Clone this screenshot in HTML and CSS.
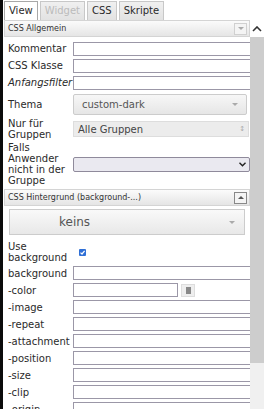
FILE: index.html
```html
<!DOCTYPE html>
<html lang="de">
<head>
    <meta charset="UTF-8">
    <meta name="viewport" content="width=device-width, initial-scale=1.0">
    <title>Widget Eigenschaften</title>
    <link rel="stylesheet" href="styles.css">
</head>
<body>
    <div class="edge"></div>

    <div class="panel">
        <!-- tabs -->
        <div class="tabs">
            <span class="tab active">View</span>
            <span class="tab disabled">Widget</span>
            <span class="tab">CSS</span>
            <span class="tab">Skripte</span>
        </div>

        <div class="main">
            <div class="content">
                <div class="group-head">
                    CSS Allgemein
                    <span class="toggle"><i class="tri-down"></i></span>
                </div>

                <div class="row">
                    <span class="label">Kommentar</span>
                    <span class="field"></span>
                </div>
                <div class="row">
                    <span class="label">CSS Klasse</span>
                    <span class="field"></span>
                </div>
                <div class="row">
                    <span class="label italic">Anfangsfilter</span>
                    <span class="field"></span>
                </div>
                <div class="row">
                    <span class="label">Thema</span>
                    <span class="ui-select">custom-dark <i class="tri-down"></i></span>
                </div>
                <div class="row multi">
                    <span class="label">Nur für Gruppen</span>
                    <span class="plain-select">Alle Gruppen <i class="updown">&#x2195;</i></span>
                </div>
                <div class="row multi">
                    <span class="label">Falls Anwender nicht in der Gruppe</span>
                    <span class="native-select">
                        <svg width="7" height="5" viewBox="0 0 7 5"><path d="M0.5 0.8 L3.5 3.8 L6.5 0.8" fill="none" stroke="#222" stroke-width="1.4"/></svg>
                    </span>
                </div>

                <div class="group-head second">
                    CSS Hintergrund (background-...)
                    <span class="toggle dark"><i class="tri-up"></i></span>
                </div>

                <div class="big-select">keins <i class="tri-down"></i></div>

                <div class="row multi use">
                    <span class="label">Use background</span>
                    <span class="check">
                        <svg width="7" height="7" viewBox="0 0 7 7"><rect width="7" height="7" rx="1" fill="#2f6fd6"/><path d="M1.5 3.6 L3 5 L5.6 1.8" fill="none" stroke="#fff" stroke-width="1.2"/></svg>
                    </span>
                </div>
                <div class="row">
                    <span class="label">background</span>
                    <span class="field"></span>
                </div>
                <div class="row">
                    <span class="label">-color</span>
                    <span class="field short"></span>
                    <span class="color-btn"><i></i></span>
                </div>
                <div class="row">
                    <span class="label">-image</span>
                    <span class="field"></span>
                </div>
                <div class="row">
                    <span class="label">-repeat</span>
                    <span class="field"></span>
                </div>
                <div class="row">
                    <span class="label">-attachment</span>
                    <span class="field"></span>
                </div>
                <div class="row">
                    <span class="label">-position</span>
                    <span class="field"></span>
                </div>
                <div class="row">
                    <span class="label">-size</span>
                    <span class="field"></span>
                </div>
                <div class="row">
                    <span class="label">-clip</span>
                    <span class="field"></span>
                </div>
                <div class="row">
                    <span class="label">-origin</span>
                    <span class="field"></span>
                </div>
            </div>

            <!-- scrollbar -->
            <div class="scrollbar">
                <div class="sb-up">
                    <svg width="10" height="6" viewBox="0 0 10 6"><path d="M1 5 L5 1 L9 5" fill="none" stroke="#333" stroke-width="1.6"/></svg>
                </div>
                <div class="sb-thumb"></div>
                <div class="sb-track"></div>
            </div>
        </div>
    </div>
</body>
</html>
```

FILE: styles.css
```css
/* panel layout */
body {
    margin: 0;
    height: 409px;
    overflow: hidden;
    display: flex;
    font-family: "DejaVu Sans", Verdana, sans-serif;
    font-size: 10px;
    color: #2a2a2a;
    background-color: #fff;
}

.edge {
    width: 3px;
    margin-right: 1px;
    background-color: #0b0b0b;
    flex: none;
}

.panel {
    flex: 1;
    min-width: 0;
    display: flex;
    flex-direction: column;
}

/* tabs */
.tabs {
    height: 20px;
    box-sizing: border-box;
    padding-top: 1px;
    display: flex;
    gap: 2px;
    flex: none;
}

.tab {
    height: 19px;
    box-sizing: border-box;
    padding: 0 4px;
    line-height: 18px;
    border: 1px solid #c8c8c8;
    border-bottom: none;
    background: linear-gradient(#f0f0f0, #e2e2e2);
}

.tab.active {
    background: #fff;
    border-color: #a8a8a8;
}

.tab.disabled {
    color: #bbb;
}

.main {
    flex: 1;
    min-height: 0;
    display: flex;
}

.content {
    flex: 1;
    min-width: 0;
    overflow: hidden;
}

/* group headers */
.group-head {
    height: 17px;
    box-sizing: border-box;
    padding: 0 2px 0 3px;
    border: 1px solid #d4d4d4;
    background: linear-gradient(#fbfbfb, #e5e5e5);
    font-size: 8px;
    color: #333;
    display: flex;
    align-items: center;
    justify-content: space-between;
    margin-bottom: 3px;
}

.group-head.second {
    margin-top: 2px;
}

.toggle {
    width: 13px;
    height: 12px;
    box-sizing: border-box;
    border: 1px solid #d0d0d0;
    background-color: #f4f4f4;
    display: flex;
    align-items: center;
    justify-content: center;
}

.toggle.dark {
    border-color: #888;
}

.tri-down,
.tri-up {
    display: inline-block;
    width: 0;
    height: 0;
    border-left: 3px solid transparent;
    border-right: 3px solid transparent;
}

.tri-down {
    border-top: 3px solid #aaa;
}

.tri-up {
    border-bottom: 3px solid #555;
}

/* form rows */
.row {
    display: flex;
    align-items: center;
    padding: 1.5px 0 1.5px 4px;
}

.row.multi {
    padding: 1px 0 1px 4px;
}

.row.use {
    padding: 2px 0 1.5px 4px;
}

.label {
    width: 65px;
    flex: none;
    line-height: 11px;
}

.italic {
    font-style: italic;
}

.field {
    flex: 1;
    height: 14px;
    box-sizing: border-box;
    border: 1px solid #9b97a7;
    border-right: none;
    background-color: #fff;
}

.field.short {
    flex: none;
    width: 105px;
    border-right: 1px solid #9b97a7;
}

.color-btn {
    width: 14px;
    height: 13px;
    box-sizing: border-box;
    margin-left: 3px;
    border: 1px solid #ddd;
    background-color: #eee;
    display: flex;
    align-items: center;
    justify-content: center;
}

.color-btn i {
    width: 5px;
    height: 7px;
    background-color: #888;
}

.ui-select {
    flex: 1;
    height: 21px;
    margin: 1px 3px 1px 0;
    box-sizing: border-box;
    padding: 0 8px;
    border: 1px solid #ccc;
    border-radius: 2px;
    background: linear-gradient(#f7f7f7, #e6e6e6);
    color: #555;
    display: flex;
    align-items: center;
    justify-content: space-between;
}

.plain-select {
    flex: 1;
    height: 16px;
    margin-right: 1px;
    box-sizing: border-box;
    padding: 0 3px 0 4px;
    border: 1px solid #ddd;
    background-color: #ececec;
    color: #444;
    display: flex;
    align-items: center;
    justify-content: space-between;
}

.updown {
    font-style: normal;
    font-size: 7px;
    color: #aaa;
}

.native-select {
    flex: 1;
    height: 15px;
    box-sizing: border-box;
    padding-right: 3px;
    border: 1px solid #8f8a9b;
    border-radius: 2px;
    background-color: #eae9f0;
    display: flex;
    align-items: center;
    justify-content: flex-end;
}

.big-select {
    height: 26px;
    margin: 0 5px 4px 5px;
    box-sizing: border-box;
    padding: 0 9px 0 49px;
    border: 1px solid #ccc;
    background: linear-gradient(#f9f9f9, #e8e8e8);
    font-size: 12px;
    color: #555;
    display: flex;
    align-items: center;
    justify-content: space-between;
}

.check {
    display: flex;
    padding-left: 6px;
}

/* scrollbar */
.scrollbar {
    width: 14px;
    flex: none;
    display: flex;
    flex-direction: column;
}

.sb-up {
    height: 17px;
    display: flex;
    align-items: center;
    justify-content: center;
}

.sb-thumb {
    height: 326px;
    background-color: #cdcdcd;
}

.sb-track {
    flex: 1;
    background-color: #f0f0f0;
}
```
